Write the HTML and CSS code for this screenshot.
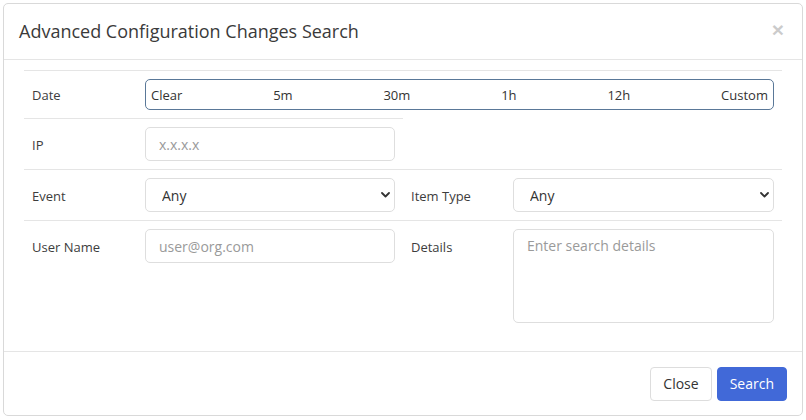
FILE: index.html
```html
<!DOCTYPE html>
<html lang="en">
<head>
<meta charset="utf-8">
<title>Advanced Configuration Changes Search</title>
<link rel="stylesheet" href="styles.css">
</head>
<body>
<div class="modal">
  <div class="modal-header">
    <h4 class="modal-title">Advanced Configuration Changes Search</h4>
    <button class="close" type="button" aria-label="Close">×</button>
  </div>
  <div class="modal-body">
    <div class="form-grid">
      <div class="cell label">Date</div>
      <div class="cell field span3">
        <div class="range-group">
          <span class="range-opt">Clear</span>
          <span class="range-opt">5m</span>
          <span class="range-opt">30m</span>
          <span class="range-opt">1h</span>
          <span class="range-opt">12h</span>
          <span class="range-opt">Custom</span>
        </div>
      </div>

      <div class="cell label">IP</div>
      <div class="cell field"><input class="input" type="text" placeholder="x.x.x.x"></div>
      <div class="spacer"></div>

      <div class="cell label">Event</div>
      <div class="cell field">
        <div class="select-wrap">
          <select class="select"><option>Any</option></select>
          <svg class="chev" width="9" height="6" viewBox="0 0 9 6"><path d="M1 1l3.5 3.5L8 1" fill="none" stroke="#333" stroke-width="1.8" stroke-linecap="round" stroke-linejoin="round"/></svg>
        </div>
      </div>
      <div class="cell label">Item Type</div>
      <div class="cell field">
        <div class="select-wrap">
          <select class="select"><option>Any</option></select>
          <svg class="chev" width="9" height="6" viewBox="0 0 9 6"><path d="M1 1l3.5 3.5L8 1" fill="none" stroke="#333" stroke-width="1.8" stroke-linecap="round" stroke-linejoin="round"/></svg>
        </div>
      </div>

      <div class="cell label">User Name</div>
      <div class="cell field"><input class="input" type="text" placeholder="user@org.com"></div>
      <div class="cell label">Details</div>
      <div class="cell field"><textarea class="input textarea" placeholder="Enter search details"></textarea></div>
    </div>
  </div>
  <div class="modal-footer">
    <button class="btn btn-default" type="button">Close</button>
    <button class="btn btn-primary" type="button">Search</button>
  </div>
</div>
</body>
</html>
```
FILE: styles.css
```css
* { box-sizing: border-box; }

html, body {
  margin: 0;
  padding: 0;
  background: #fff;
}

body {
  padding: 3px 0 0 3px;
  font-family: "Open Sans", "DejaVu Sans", sans-serif;
  color: #333;
}

.modal {
  width: 800px;
  height: 413px;
  border: 1px solid #d9d9d9;
  border-radius: 5px;
  background: #fff;
  display: flex;
  flex-direction: column;
}

.modal-header {
  display: flex;
  align-items: center;
  justify-content: space-between;
  padding: 15px 15px;
  border-bottom: 1px solid #e5e5e5;
  height: 56px;
}

.modal-title {
  margin: 0;
  font-size: 18px;
  font-weight: 400;
  line-height: 25px;
  color: #3a3a3a;
}

.close {
  border: 0;
  background: transparent;
  padding: 0;
  margin-top: -4px;
  margin-right: 3px;
  font-family: "Liberation Sans", Arial, sans-serif;
  font-size: 21px;
  font-weight: bold;
  line-height: 1;
  color: #000;
  opacity: 0.2;
}

.modal-body {
  flex: 1;
  padding: 10px 20px 20px;
}

.form-grid {
  display: grid;
  grid-template-columns: 113px 266px 102px 1fr;
}

.cell {
  border-top: 1px solid #e5e5e5;
  padding: 8px;
}

.span3 { grid-column: span 3; }
.spacer { grid-column: span 2; }

.label {
  font-size: 13px;
  line-height: 34px;
  padding-top: 9px;
  padding-bottom: 7px;
  color: #3d3d3d;
}

.form-grid > .label:first-child { line-height: 31px; }

.range-group {
  height: 31px;
  border: 1px solid #5a7898;
  border-radius: 5px;
  display: flex;
  align-items: center;
  justify-content: space-between;
  padding: 0 5px;
  font-size: 13px;
  color: #333;
}

.input {
  display: block;
  width: 100%;
  height: 34px;
  border: 1px solid #dedede;
  border-radius: 5px;
  padding: 6px 13px;
  font-family: "Open Sans", "DejaVu Sans", sans-serif;
  font-size: 14px;
  color: #555;
  background: #fff;
  outline: none;
}

.input::placeholder { color: #9a9a9a; }

.textarea {
  height: 94px;
  resize: none;
  padding: 6px 13px;
}

.select-wrap {
  position: relative;
}

.select {
  display: block;
  width: 100%;
  height: 34px;
  border: 1px solid #dedede;
  border-radius: 5px;
  padding: 0 16px;
  font-family: "Open Sans", "DejaVu Sans", sans-serif;
  font-size: 14px;
  color: #333;
  background: #fff;
  appearance: none;
  -webkit-appearance: none;
  outline: none;
}

.chev {
  position: absolute;
  right: 5px;
  top: 14px;
}

.modal-footer {
  display: flex;
  justify-content: flex-end;
  gap: 5px;
  padding: 15px;
  border-top: 1px solid #e5e5e5;
}

.btn {
  height: 34px;
  padding: 0 12px;
  border-radius: 4px;
  font-family: "Open Sans", "DejaVu Sans", sans-serif;
  font-size: 14px;
  line-height: 32px;
  cursor: pointer;
}

.btn-default {
  background: #fff;
  border: 1px solid #ddd;
  color: #333;
}

.btn-primary {
  background: #4169d8;
  border: 1px solid #4169d8;
  color: #fff;
}
```
